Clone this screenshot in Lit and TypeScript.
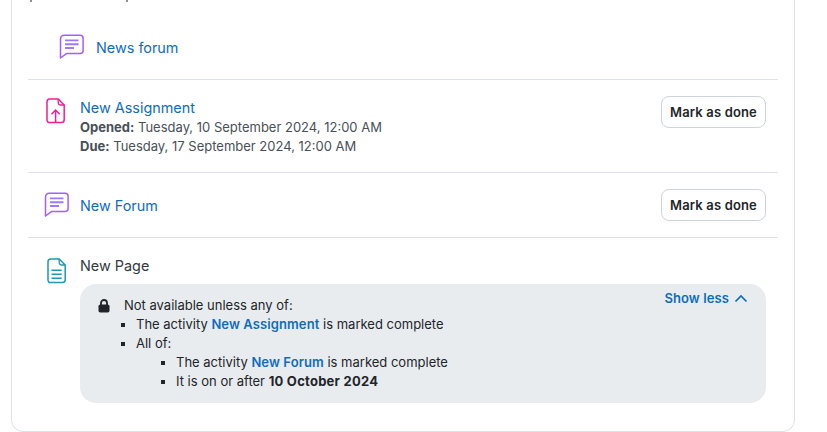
import { LitElement, html, css, svg } from "lit";
import { customElement } from "lit/decorators.js";

const forumIcon = svg`<path d="M5.500 1.200h15.600c1.800 0 3 1.200 3 3v12.400c0 1.800-1.200 3-3 3H7.400L1.500 24V5.200c0-2.400 1.600-4 4-4z" fill="none" stroke="#a45ff8" stroke-width="1.500" stroke-linejoin="round"/><path d="M6 6.400h13.500M6 10.200h13.500M6 14h9" fill="none" stroke="#9d7bfa" stroke-width="1.900"/>`;
const assignIcon = svg`<path d="M3.800 1h8.400l6 6v14.800c0 1.800-1 2.800-2.800 2.800H3.800C2 24.600 1 23.600 1 21.800V3.800C1 2 2 1 3.800 1z" fill="none" stroke="#f01f8e" stroke-width="1.500"/><path d="M12.200 1v3.400c0 1.700.9 2.600 2.600 2.600h3.400" fill="none" stroke="#f01f8e" stroke-width="1.300"/><path d="M9.600 24V12.200M5.500 16.200l4.100-4.200 4.100 4.200" fill="none" stroke="#f01f8e" stroke-width="1.500"/>`;
const pageIcon = svg`<path d="M3.800 1h8.400l6 6v14.800c0 1.800-1 2.800-2.800 2.800H3.800C2 24.600 1 23.600 1 21.800V3.800C1 2 2 1 3.800 1z" fill="none" stroke="#1a9bb0" stroke-width="1.500"/><path d="M12.200 1v3.400c0 1.700.9 2.600 2.600 2.600h3.400" fill="none" stroke="#1a9bb0" stroke-width="1.300"/><path d="M4.500 12.200h10.200M4.500 16.200h10.200M4.500 20.200h10.200" fill="none" stroke="#1a9bb0" stroke-width="1.500"/>`;

@customElement("app-root")
export class AppRoot extends LitElement {
  static styles = css`
    :host {
      display: block;
      height: 432px;
      overflow: hidden;
      background: #fff;
      font-family: Inter, "Liberation Sans", sans-serif;
      font-size: 14.4px;
      color: #343a40;
    }
    .card {
      box-sizing: border-box;
      width: 784px;
      height: 452px;
      margin: -20px 0 0 11px;
      padding: 0 16px;
      border: 1px solid #dee2e6;
      border-radius: 12px;
      background: #fff;
    }
    .clip {
      box-sizing: border-box;
      height: 39px;
      padding-top: 19px;
      display: flex;
      gap: 92px;
    }
    .clip i { width: 2px; height: 2px; margin-left: 2px; background: #8a8f94; }
    .row {
      display: flex;
      align-items: flex-start;
      border-bottom: 1px solid #dee2e6;
    }
    .row:last-child { border-bottom: 0; }
    .r1 { box-sizing: border-box; height: 60px; padding: 0 0 5px 31px; align-items: center; }
    .r2 { padding-top: 16px; height: 76px; }
    .r3 { height: 48px; padding-top: 16px; }
    .r4 { padding-top: 17px; }
    .ic { flex: none; display: block; }
    .body { flex: 1; min-width: 0; }
    a { color: #0f6cbf; text-decoration: none; }
    .title { line-height: 21px; display: block; }
    .title-mid { line-height: 33px; }
    .r2 .title { padding-top: 1px; }
    .dates { font-size: 13px; line-height: 19px; color: #495057; }
    b { font-weight: 700; }
    .avail b { letter-spacing: 0.25px; }
    .btn {
      flex: none;
      box-sizing: border-box;
      width: 105px;
      height: 32px;
      margin-right: 12px;
      border: 1px solid #ced4da;
      border-radius: 8px;
      background: #fff;
      color: #212529;
      font: 600 13px/30px Inter, "Liberation Sans", sans-serif;
      letter-spacing: 0.15px;
      text-align: center;
      padding: 0;
    }
    .i-news { margin-right: 11px; }
    .i-assign { margin: 2px 14px 0 18px; }
    .i-forum { margin: 3px 10px 0 16px; }
    .i-page { margin: 3px 13px 0 19px; }
    .avail {
      position: relative;
      box-sizing: border-box;
      width: 686px;
      height: 119px;
      margin-top: 8px;
      padding: 12px 0 0 18px;
      border-radius: 16px;
      background: #e9ecef;
      color: #212529;
      font-size: 13px;
      line-height: 19px;
    }
    .avail a { font-weight: 600; letter-spacing: 0.1px; }
    .head { display: flex; align-items: center; gap: 14px; }
    ul { margin: 0; padding: 0 0 0 38px; list-style: square; }
    ul ul { padding-left: 40px; }
    li::marker { font-size: 12px; }
    .more {
      position: absolute;
      top: 5px;
      right: 18px;
      display: flex;
      align-items: center;
      gap: 5px;
      color: #0f6cbf;
      font-weight: 600;
      letter-spacing: 0.1px;
    }
  `;

  render() {
    return html`
      <div class="card">
        <div class="clip"><i></i><i></i></div>
        <div class="row r1">
          <svg class="ic i-news" width="26" height="26" viewBox="0 0 26 26">${forumIcon}</svg>
          <a href="#">News forum</a>
        </div>
        <div class="row r2">
          <svg class="ic i-assign" width="20" height="26" viewBox="0 0 20 26">${assignIcon}</svg>
          <div class="body">
            <a class="title" href="#">New Assignment</a>
            <div class="dates"><b>Opened:</b> Tuesday, 10 September 2024, 12:00 AM</div>
            <div class="dates"><b>Due:</b> Tuesday, 17 September 2024, 12:00 AM</div>
          </div>
          <button class="btn">Mark as done</button>
        </div>
        <div class="row r3">
          <svg class="ic i-forum" width="26" height="26" viewBox="0 0 26 26">${forumIcon}</svg>
          <div class="body"><a class="title title-mid" href="#">New Forum</a></div>
          <button class="btn">Mark as done</button>
        </div>
        <div class="row r4">
          <svg class="ic i-page" width="20" height="26" viewBox="0 0 20 26">${pageIcon}</svg>
          <div class="body">
            <div class="title">New Page</div>
            <div class="avail">
              <div class="more">Show less
                <svg width="14" height="10" viewBox="0 0 14 10"><path d="M1.500 7.500L7 2l5.500 5.500" fill="none" stroke="#0f6cbf" stroke-width="1.700"/></svg>
              </div>
              <div class="head">
                <svg width="12" height="14" viewBox="0 0 12 14"><path d="M3 6V4a3 3 0 016 0v2" fill="none" stroke="#212529" stroke-width="1.800"/><rect x="0.500" y="5.500" width="11" height="8" rx="1.800" fill="#212529"/></svg>
                <span>Not available unless any of:</span>
              </div>
              <ul>
                <li>The activity <a href="#">New Assignment</a> is marked complete</li>
                <li>All of:
                  <ul>
                    <li>The activity <a href="#">New Forum</a> is marked complete</li>
                    <li>It is on or after <b>10 October 2024</b></li>
                  </ul>
                </li>
              </ul>
            </div>
          </div>
        </div>
      </div>
    `;
  }
}
